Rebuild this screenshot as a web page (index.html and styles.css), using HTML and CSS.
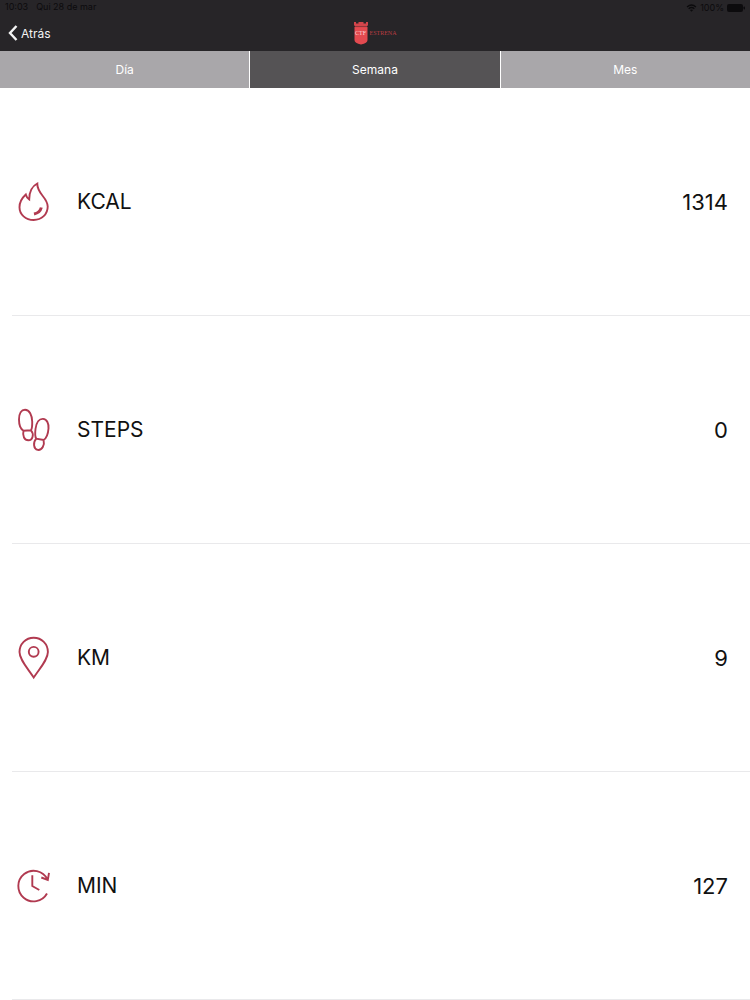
FILE: index.html
```html
<!DOCTYPE html>
<html lang="es">
<head>
<meta charset="utf-8">
<meta name="viewport" content="width=device-width, initial-scale=1">
<title>Actividad</title>
<link rel="stylesheet" href="styles.css">
</head>
<body>
<div class="app">
  <header class="header">
    <div class="status">
      <div class="status-group"><span>10:03</span><span>Qui 28 de mar</span></div>
      <div class="status-group status-right">
        <svg class="wifi" viewBox="0 0 12 9" aria-hidden="true"><path d="M1 3.4Q6-1 11 3.4M2.8 5.3Q6 2.6 9.2 5.3" fill="none" stroke="currentColor" stroke-width="1.5"/><path d="M4.2 6.7Q6 5.4 7.8 6.7L6 8.7Z" fill="currentColor"/></svg>
        <span>100%</span>
        <svg class="battery" viewBox="0 0 18 8" aria-hidden="true"><rect x="0" y="0" width="16" height="8" rx="2" fill="currentColor"/><rect x="16.500" y="2.500" width="1.500" height="3" rx=".7" fill="currentColor"/></svg>
      </div>
    </div>
    <div class="navbar">
      <a class="back" href="#"><svg class="chevron" viewBox="0 0 10 18" aria-hidden="true"><path d="M8.500 2L2 9l6.500 7" fill="none" stroke="currentColor" stroke-width="2.400"/></svg>Atrás</a>
      <div class="brand">
        <div class="shield">
          <svg class="shield-shape" viewBox="0 0 14 24" aria-hidden="true"><path d="M0 1h2v1.500h2.500V1h5v1.500H12V1h2v3l-1 1.500H1L0 4Z" fill="#d2454b"/><path d="M.5 6h13v13q0 3-6.500 4.500Q.5 22 .5 19Z" fill="#e34a50"/><path d="M1 5.700h12" stroke="#a8373c" stroke-width=".6"/></svg>
          <span class="shield-text">CTF</span>
        </div>
        <span class="brand-name">ESTRENA</span>
      </div>
    </div>
  </header>
  <nav class="tabs">
    <button class="tab" type="button">Día</button>
    <button class="tab tab-active" type="button" aria-current="true">Semana</button>
    <button class="tab" type="button">Mes</button>
  </nav>
  <main class="list">
    <section class="row">
      <svg class="icon" viewBox="0 0 44 44" aria-hidden="true"><path d="M25.300 3.500C19.500 6.500 17.200 12.500 17.200 19.500C15.500 18.500 14.500 17 13.800 14.500C10.500 17.500 7.500 22 7.500 27.200C7.500 34.500 13.700 40 21.600 40C29.700 40 35.700 34.300 35.700 26.500C35.700 17.500 25 14 25.300 3.500Z"/><path class="thick" d="M29.300 27.500Q28 32.800 22 34"/></svg>
      <h2 class="label">KCAL</h2><span class="value">1314</span>
    </section>
    <section class="row">
      <svg class="icon" viewBox="0 0 44 44" aria-hidden="true"><path d="M11.500 22.800C8.500 21 7 16.500 7 11.500C7 5.500 9.500 1.700 13 1.700C17.500 1.700 20 7 20.200 13.500C20.300 17.500 20.200 20.500 19 22.300ZM11.500 22.800C10.200 28 12.500 32.300 16.300 32.300C20.800 32.300 22.300 26 19 22.300M24.200 30.600C22.900 28.500 23 25 23.500 21C24.300 14.500 27.300 10.700 31 10.900C35 11.200 36.900 15.500 36.500 20.500C36.100 25.500 34.500 30.300 31.600 32ZM24.200 30.600C20.800 34.500 21.500 41 25.700 41.900C30.200 42.500 32.800 37 31.600 32"/></svg>
      <h2 class="label">STEPS</h2><span class="value">0</span>
    </section>
    <section class="row">
      <svg class="icon" viewBox="0 0 44 44" aria-hidden="true"><path d="M21.700 1.700C13.700 1.700 7.500 8 7.500 16C7.500 23.500 15 31.500 21.700 41.500C28.500 31.500 35.900 23.500 35.900 16C35.900 8 29.700 1.700 21.700 1.700Z"/><circle cx="21.700" cy="15.800" r="4.900"/></svg>
      <h2 class="label">KM</h2><span class="value">9</span>
    </section>
    <section class="row">
      <svg class="icon" viewBox="0 0 44 44" aria-hidden="true"><path d="M35.300 15.200A15.300 15.300 0 1 0 35 29.500M29.300 13.500L35.800 16L37 8.800M20.300 11.300V22L27.300 26"/></svg>
      <h2 class="label">MIN</h2><span class="value">127</span>
    </section>
  </main>
</div>
</body>
</html>
```
FILE: styles.css
```css
* {
  box-sizing: border-box;
}

body {
  margin: 0;
  background: #fff;
  color: #111;
  font-family: Inter, "Liberation Sans", sans-serif;
}

.app {
  display: flex;
  flex-direction: column;
  min-height: 100vh;
}

.header {
  background: #272528;
}

.status {
  display: flex;
  justify-content: space-between;
  height: 15px;
  padding: 0 5px;
  color: #0c0b0d;
  font-size: 9px;
  line-height: 14px;
}

.status-group {
  display: flex;
  gap: 8px;
}

.status-right {
  align-items: center;
  gap: 3px;
}

.wifi {
  width: 11px;
  height: 8px;
}

.battery {
  width: 18px;
  height: 8px;
}

.navbar {
  display: grid;
  grid-template-columns: 1fr auto 1fr;
  align-items: center;
  height: 36px;
  padding: 0 8px;
}

.back {
  display: flex;
  align-items: center;
  gap: 3px;
  color: #f4f4f4;
  font-size: 12px;
  text-decoration: none;
}

.chevron {
  width: 10px;
  height: 18px;
}

.brand {
  display: flex;
  align-items: center;
  gap: 2px;
  font-family: "Liberation Serif", serif;
}

.shield {
  display: grid;
  place-items: center;
}

.shield-shape,
.shield-text {
  grid-area: 1 / 1;
}

.shield-shape {
  width: 14px;
  height: 24px;
}

.shield-text {
  color: #fbd5d3;
  font-size: 6px;
}

.brand-name {
  color: #b83c42;
  font-size: 6px;
}

.tabs {
  display: grid;
  grid-template-columns: repeat(3, 1fr);
  gap: 1px;
  height: 37px;
  background: #fff;
}

.tab {
  border: 0;
  padding: 0;
  background: #a9a7aa;
  color: #fff;
  font: inherit;
  font-size: 12px;
}

.tab-active {
  background: #555355;
}

.list {
  display: flex;
  flex: 1;
  flex-direction: column;
  padding-left: 12px;
}

.row {
  display: flex;
  flex: 1;
  align-items: center;
  border-bottom: 1px solid #e9e9eb;
  padding-right: 22px;
}

.icon {
  width: 44px;
  height: 44px;
  margin-right: 21px;
  fill: none;
  stroke: #b13a50;
  stroke-width: 1.9;
}

.thick {
  stroke-width: 3;
}

.label,
.value {
  margin: 0;
  font-size: 22px;
  font-weight: 400;
  line-height: 28px;
}

.label {
  font-size: 21px;
}

.value {
  margin-left: auto;
}
```
